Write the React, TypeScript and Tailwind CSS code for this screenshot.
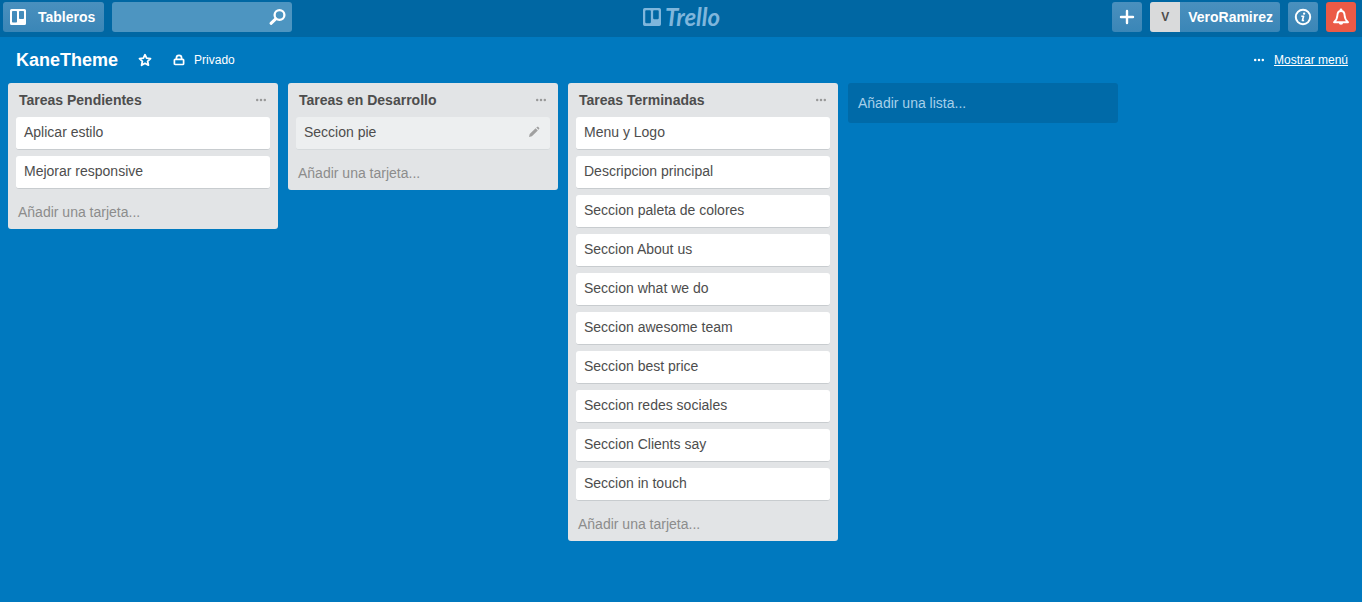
import type { ReactNode } from "react";

type Card = { title: string; active?: boolean };
type List = { title: string; cards: Card[] };

const lists: List[] = [
  {
    title: "Tareas Pendientes",
    cards: [{ title: "Aplicar estilo" }, { title: "Mejorar responsive" }],
  },
  {
    title: "Tareas en Desarrollo",
    cards: [{ title: "Seccion pie", active: true }],
  },
  {
    title: "Tareas Terminadas",
    cards: [
      { title: "Menu y Logo" },
      { title: "Descripcion principal" },
      { title: "Seccion paleta de colores" },
      { title: "Seccion About us" },
      { title: "Seccion what we do" },
      { title: "Seccion awesome team" },
      { title: "Seccion best price" },
      { title: "Seccion redes sociales" },
      { title: "Seccion Clients say" },
      { title: "Seccion in touch" },
    ],
  },
];

function BoardIcon({ className }: { className: string }) {
  return (
    <svg viewBox="0 0 16 16" className={className} fill="currentColor" aria-hidden="true">
      <path
        fillRule="evenodd"
        d="M1.500 0h13a1.500 1.500 0 0 1 1.500 1.500v13a1.500 1.500 0 0 1-1.500 1.500h-13a1.500 1.500 0 0 1-1.500-1.500v-13a1.500 1.500 0 0 1 1.500-1.500ZM2.800 2a.8.8 0 0 0-.8.8v9.900c0 .4.4.8.8.8h3.400c.4 0 .8-.4.8-.8V2.800a.8.8 0 0 0-.8-.8ZM9.800 2a.8.8 0 0 0-.8.8v6.400c0 .4.4.8.8.8h3.400c.4 0 .8-.4.8-.8V2.800a.8.8 0 0 0-.8-.8Z"
      />
    </svg>
  );
}

function SearchIcon() {
  return (
    <svg viewBox="0 0 18 18" className="size-[18px]" fill="none" stroke="currentColor" aria-hidden="true">
      <circle cx="11.500" cy="7" r="4.900" strokeWidth="2.300" />
      <path d="M7.700 10.800 3 15.300" strokeWidth="3" strokeLinecap="round" />
    </svg>
  );
}

function PlusIcon() {
  return (
    <svg viewBox="0 0 16 16" className="size-4" fill="none" stroke="currentColor" strokeWidth="2.400" strokeLinecap="round" aria-hidden="true">
      <path d="M8 2v12M2 8h12" />
    </svg>
  );
}

function InfoIcon() {
  return (
    <svg viewBox="0 0 18 18" className="size-[18px]" aria-hidden="true">
      <circle cx="9" cy="9" r="7.200" fill="none" stroke="currentColor" strokeWidth="2" />
      <circle cx="10.100" cy="5.700" r="1.150" fill="currentColor" />
      <path d="M7.300 8.200h2.300l-1.200 4.300h1.700" fill="none" stroke="currentColor" strokeWidth="1.600" strokeLinejoin="round" />
    </svg>
  );
}

function BellIcon() {
  return (
    <svg viewBox="0 0 18 18" className="size-[18px]" fill="none" stroke="currentColor" strokeWidth="1.900" strokeLinejoin="round" aria-hidden="true">
      <path d="M9 3c-2.400 0-3.500 1.700-3.600 4.300-.1 3.200-1 4.900-3.400 6.900h14c-2.400-2-3.300-3.700-3.400-6.900C12.500 4.700 11.400 3 9 3Z" />
      <circle cx="9" cy="2" r="1.400" fill="currentColor" stroke="none" />
      <path d="M6.800 14.600a2.200 2.200 0 0 0 4.400 0Z" fill="currentColor" stroke="none" />
    </svg>
  );
}

function StarIcon() {
  return (
    <svg viewBox="0 0 14 14" className="size-3.5" fill="none" stroke="currentColor" strokeWidth="1.800" strokeLinejoin="round" aria-hidden="true">
      <path d="m7 1.700 1.600 3.500 3.900.5-2.900 2.600.8 3.900L7 10.300l-3.400 1.900.8-3.900-2.900-2.600 3.900-.5Z" />
    </svg>
  );
}

function LockIcon() {
  return (
    <svg viewBox="0 0 12 12" className="size-3" fill="none" stroke="currentColor" strokeWidth="1.700" aria-hidden="true">
      <rect x="1.400" y="5.300" width="9.200" height="5.200" rx="0.800" />
      <path d="M3.400 5.300V4a2.600 2.600 0 0 1 5.200 0v1.300" />
    </svg>
  );
}

function DotsIcon() {
  return (
    <svg viewBox="0 0 12 4" className="h-1 w-3" fill="currentColor" aria-hidden="true">
      <circle cx="2.200" cy="2" r="1.250" />
      <circle cx="6" cy="2" r="1.250" />
      <circle cx="9.800" cy="2" r="1.250" />
    </svg>
  );
}

function PencilIcon() {
  return (
    <svg viewBox="0 0 12 12" className="size-3" fill="currentColor" aria-hidden="true">
      <path d="M1 11l.7-2.900 5.900-5.800 2.200 2.200-5.900 5.800ZM8.300 1.600l.7-.6c.4-.4 1-.4 1.300 0l.8.800c.4.4.4.9 0 1.300l-.7.700Z" />
    </svg>
  );
}

const headerButton =
  "flex h-[30px] items-center rounded-[3px] bg-linear-to-b from-[#4a90be] to-[#3a86b7] text-white";

function IconButton({ label, children }: { label: string; children: ReactNode }) {
  return (
    <button type="button" aria-label={label} className={`${headerButton} w-[30px] justify-center`}>
      {children}
    </button>
  );
}

function ListColumn({ list }: { list: List }) {
  return (
    <section className="w-[270px] shrink-0 rounded-[3px] bg-[#e2e4e6] px-2">
      <header className="flex h-[34px] items-center justify-between px-[3px]">
        <h2 className="text-[14px] font-bold leading-[18px] text-[#4d4d4d]">{list.title}</h2>
        <button type="button" aria-label="Acciones de la lista" className="text-[#999]">
          <DotsIcon />
        </button>
      </header>
      <ul className="flex flex-col gap-1.5">
        {list.cards.map((card) => (
          <li
            key={card.title}
            className={`flex h-[33px] items-center justify-between rounded-[3px] border-b pb-0.5 pl-2 pr-2.5 ${
              card.active ? "border-[#d6dadc] bg-[#edeff0]" : "border-[#c8cccf] bg-white"
            }`}
          >
            <a href="#" className="text-[14px] leading-[18px] text-[#4d4d4d]">
              {card.title}
            </a>
            {card.active && (
              <button type="button" aria-label="Editar tarjeta" className="text-[#a0a0a0]">
                <PencilIcon />
              </button>
            )}
          </li>
        ))}
      </ul>
      <button type="button" className="mt-1.5 flex h-[34px] w-full items-center pl-0.5 text-[14px] leading-[18px] text-[#8c8c8c]">
        Añadir una tarjeta...
      </button>
    </section>
  );
}

export default function App() {
  return (
    <div className="min-h-screen bg-[#0079bf] font-['Liberation_Sans',Arial,sans-serif]">
      <header className="grid h-[37px] grid-cols-[1fr_auto_1fr] items-start bg-[#0067a3] pl-[3px] pr-1.5 pt-0.5">
        <div className="flex gap-2">
          <button type="button" className={`${headerButton} gap-3 pl-[7px] pr-[9px] text-[14px] font-bold`}>
            <BoardIcon className="size-4" />
            Tableros
          </button>
          <div className="flex h-[30px] w-[180px] items-center rounded-[3px] bg-[#4d95c1] pr-1.5 text-white">
            <input type="text" aria-label="Buscar" className="h-full min-w-0 flex-1 bg-transparent px-2 text-[14px] outline-none" />
            <button type="button" aria-label="Iniciar búsqueda">
              <SearchIcon />
            </button>
          </div>
        </div>
        <a href="#" className="flex h-[30px] items-center gap-1 pl-1 text-[#7fb6dc]">
          <BoardIcon className="size-[18px]" />
          <span className="font-['Lato',sans-serif] text-[24px] font-bold italic leading-[30px]">Trello</span>
        </a>
        <div className="flex justify-end gap-2">
          <IconButton label="Crear">
            <PlusIcon />
          </IconButton>
          <button type="button" className={`${headerButton} overflow-hidden pr-[7px] text-[14px] font-bold`}>
            <span className="mr-2 flex size-[30px] items-center justify-center bg-[#d9dadb] text-[12px] text-[#4d4d4d]">V</span>
            VeroRamirez
          </button>
          <IconButton label="Información">
            <InfoIcon />
          </IconButton>
          <button type="button" aria-label="Notificaciones" className="flex size-[30px] items-center justify-center rounded-[3px] bg-[#eb5a46] text-white">
            <BellIcon />
          </button>
        </div>
      </header>
      <div className="flex h-[46px] items-center justify-between pl-4 pr-3.5 text-[12px] text-white">
        <div className="flex items-center">
          <h1 className="text-[18px] font-bold leading-6">KaneTheme</h1>
          <button type="button" aria-label="Marcar tablero" className="ml-5">
            <StarIcon />
          </button>
          <button type="button" className="ml-[21px] flex items-center gap-[9px]">
            <LockIcon />
            Privado
          </button>
        </div>
        <a href="#" className="flex items-center gap-[9px]">
          <DotsIcon />
          <span className="underline">Mostrar menú</span>
        </a>
      </div>
      <main className="flex items-start gap-2.5 px-2 pb-4">
        {lists.map((list) => (
          <ListColumn key={list.title} list={list} />
        ))}
        <button type="button" className="flex h-10 w-[270px] shrink-0 items-center rounded-[3px] bg-[#006aa8] px-2.5 text-[14px] text-[#a6d0ea]">
          Añadir una lista...
        </button>
      </main>
    </div>
  );
}
